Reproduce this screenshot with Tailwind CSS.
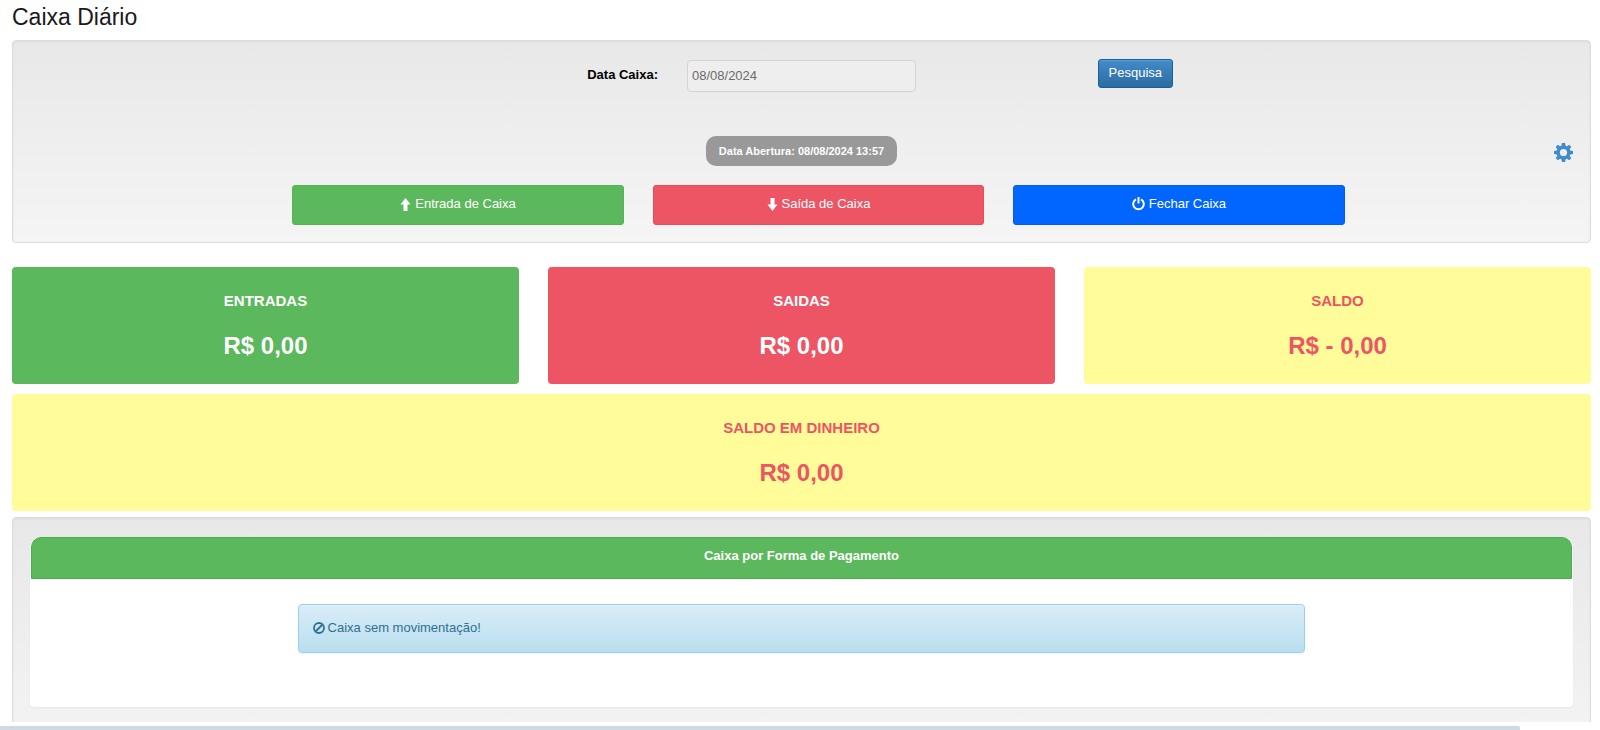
<!DOCTYPE html>
<html lang="pt-BR">
<head>
<meta charset="utf-8">
<meta name="viewport" content="width=device-width, initial-scale=1">
<title>Caixa Diário</title>
<script src="https://cdn.jsdelivr.net/npm/@tailwindcss/browser@4"></script>
</head>
<body class="flex h-screen flex-col overflow-hidden bg-white font-['Liberation_Sans',Arial,sans-serif] text-[13px] leading-5 text-black">
<main class="min-h-0 flex-1 overflow-hidden pl-3 pr-[9px]">
  <h1 class="mb-[6px] text-[23px] leading-[34px] text-[#1a1a1a]">Caixa Diário</h1>

  <section class="rounded-[4px] border border-[#dcdcdc] bg-linear-to-b from-[#e8e8e8] to-[#f5f5f5] px-[17px] pb-[17px] pt-[18px] shadow-[inset_0_1px_3px_rgba(0,0,0,0.05),0_1px_0_rgba(255,255,255,0.1)]">
    <form class="grid grid-cols-[1fr_229px_1fr] items-start gap-x-[29px]">
      <label for="data" class="pt-[6px] text-right font-bold">Data Caixa:</label>
      <input id="data" type="text" value="08/08/2024" readonly class="mt-px h-8 w-full rounded-[4px] border border-[#d3d3d3] bg-[#eeeeee] px-1 pb-px text-[#6b6b6b] outline-none">
      <div class="pl-[24.3%]">
        <button type="button" class="h-[29px] rounded-[3px] border border-[#1b5f99] bg-linear-to-b from-[#428bca] to-[#2d6ca2] px-[10px] pb-[2px] leading-[25px] text-white shadow-[inset_0_1px_0_rgba(255,255,255,0.15)]">Pesquisa</button>
      </div>
    </form>

    <div class="mt-11 grid grid-cols-[1fr_auto_1fr] items-center">
      <span></span>
      <span class="rounded-[10px] bg-[#999999] px-[13px] text-[11px] font-bold leading-[30px] text-white">Data Abertura: 08/08/2024 13:57</span>
      <a href="#" aria-label="Configurações" class="justify-self-end pt-[3px] text-[#428bca]">
        <svg class="block size-[19px]" viewBox="0 0 20 20" fill="currentColor" fill-rule="evenodd"><path d="M8.300 0h3.400l.5 2.900 1.400.6 2.400-1.700 2.300 2.300-1.800 2.300.6 1.400 2.900.5v3.400l-2.900.5-.6 1.400 1.800 2.300-2.300 2.300-2.400-1.700-1.400.6-.5 2.900H8.300l-.5-2.900-1.400-.6L4 18.200l-2.300-2.300 1.800-2.300-.6-1.400L0 11.700V8.300l2.900-.5.6-1.400-1.800-2.300L4 1.800l2.400 1.700 1.400-.6zM10 6.200a3.800 3.800 0 1 0 0 7.600 3.800 3.800 0 0 0 0-7.600z"/></svg>
      </a>
    </div>

    <div class="ml-[17%] mr-[14.8%] mt-[19px] grid grid-cols-3 gap-[29px] text-white">
      <button type="button" class="flex h-10 items-center justify-center gap-1 rounded-[3px] border border-[#56b457] bg-[#5cb85c] pb-[2px]">
        <svg class="h-[13px] w-[11px]" viewBox="0 0 11 13" fill="currentColor"><path d="M5.500 0 10.500 6.500H7.500V13h-4V6.500H.5z"/></svg>Entrada de Caixa</button>
      <button type="button" class="flex h-10 items-center justify-center gap-1 rounded-[3px] border border-[#ea4a5b] bg-[#ed5565] pb-[2px]">
        <svg class="h-[13px] w-[11px]" viewBox="0 0 11 13" fill="currentColor"><path d="M5.500 13 10.500 6.500H7.500V0h-4v6.500H.5z"/></svg>Saída de Caixa</button>
      <button type="button" class="flex h-10 items-center justify-center gap-1 rounded-[3px] border border-[#005df5] bg-[#0066ff] pb-[2px]">
        <svg class="h-[14px] w-[13px]" viewBox="0 0 13 14" fill="none" stroke="currentColor" stroke-width="2"><path d="M4 2.300a5.300 5.300 0 1 0 5 0M6.500 0v6.500"/></svg>Fechar Caixa</button>
    </div>
  </section>

  <div class="mt-6 grid grid-cols-3 gap-x-[29px] gap-y-[10px] text-center font-bold">
    <section class="rounded-[4px] bg-[#5cb85c] pb-[24px] pt-[24px] text-white">
      <h2 class="text-[15px] leading-5">ENTRADAS</h2>
      <p class="mt-[21px] text-[24px] leading-7">R$ 0,00</p>
    </section>
    <section class="rounded-[4px] bg-[#ed5565] pb-[24px] pt-[24px] text-white">
      <h2 class="text-[15px] leading-5">SAIDAS</h2>
      <p class="mt-[21px] text-[24px] leading-7">R$ 0,00</p>
    </section>
    <section class="rounded-[4px] bg-[#fffc99] pb-[24px] pt-[24px] text-[#ed5565]">
      <h2 class="text-[15px] leading-5">SALDO</h2>
      <p class="mt-[21px] text-[24px] leading-7">R$ - 0,00</p>
    </section>
    <section class="col-span-3 rounded-[4px] bg-[#fffc99] pb-[24px] pt-[24px] text-[#ed5565]">
      <h2 class="text-[15px] leading-5">SALDO EM DINHEIRO</h2>
      <p class="mt-[21px] text-[24px] leading-7">R$ 0,00</p>
    </section>
  </div>

  <section class="mt-[6px] rounded-[4px] border border-[#dcdcdc] bg-linear-to-b from-[#e8e8e8] to-[#f5f5f5] px-[17px] pb-[60px] pt-[19px] shadow-[inset_0_1px_3px_rgba(0,0,0,0.05)]">
    <div class="rounded-b-[4px] rounded-t-[10px] border-x border-white bg-white pb-[54px] shadow-[0_1px_2px_rgba(0,0,0,0.05)]">
      <h3 class="rounded-t-[10px] border border-[#45b145] bg-[#5cb85c] pb-1 text-center font-bold leading-[36px] text-white">Caixa por Forma de Pagamento</h3>
      <p class="mx-[17.3%] mt-[25px] flex items-center gap-[3px] rounded-[4px] border border-[#9acfea] bg-linear-to-b from-[#d9edf7] to-[#b9def0] px-[14px] pb-[2px] leading-[45px] text-[#31708f] shadow-[inset_0_1px_0_rgba(255,255,255,0.25),0_1px_2px_rgba(0,0,0,0.05)]">
        <svg class="size-3" viewBox="0 0 12 12" fill="none" stroke="currentColor" stroke-width="1.800"><circle cx="6" cy="6" r="5"/><path d="m2.500 9.500 7-7"/></svg>Caixa sem movimentação!</p>
    </div>
  </section>
</main>
<div class="mt-1 h-1 w-[95%] rounded-tr-[2px] bg-[#d0dae3]"></div>
</body>
</html>
